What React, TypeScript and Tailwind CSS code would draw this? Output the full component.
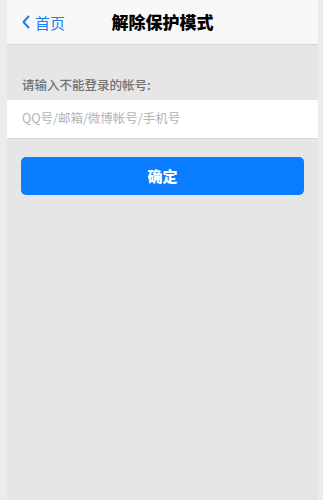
export default function App() {
  return (
    <div
      className="flex h-[500px] w-[323px] bg-[#ededed]"
      style={{ fontFamily: '"Noto Sans CJK SC", "Liberation Sans", sans-serif' }}
    >
      <div className="w-[7px] shrink-0 bg-[#ececec]" />
      <div className="flex flex-1 flex-col bg-[#e6e6e6]">
        <header className="relative flex h-[45px] items-center border-b border-[#d4d4d4] bg-[#f8f8f8]">
          <button type="button" className="flex items-center gap-[5px] pl-[15px] text-[#1a7cf5]">
            <svg width="8" height="14" viewBox="0 0 8 14" fill="none">
              <path d="M6.5 1.5L1.5 7l5 5.5" stroke="currentColor" strokeWidth="2" strokeLinecap="round" strokeLinejoin="round" />
            </svg>
            <span className="text-[15px] leading-none">首页</span>
          </button>
          <h1 className="pointer-events-none absolute inset-x-0 text-center text-[17px] font-black text-black">
            解除保护模式
          </h1>
        </header>
        <p className="mt-[31px] pl-[15px] text-[12.5px] font-medium text-[#727272]">请输入不能登录的帐号:</p>
        <div className="mt-[5px] flex h-[39px] items-center border-b border-[#d9d9d9] bg-white pl-[15px]">
          <span className="text-[12.5px] text-[#b3b3b3]">QQ号/邮箱/微博帐号/手机号</span>
        </div>
        <div className="px-[14px] pt-[18px]">
          <button
            type="button"
            className="flex h-[38px] w-full items-center justify-center rounded-[5px] bg-[#0a7cff] text-[15px] font-black text-white"
          >
            确定
          </button>
        </div>
      </div>
      <div className="w-[5px] shrink-0 bg-[#ececec]" />
    </div>
  );
}
